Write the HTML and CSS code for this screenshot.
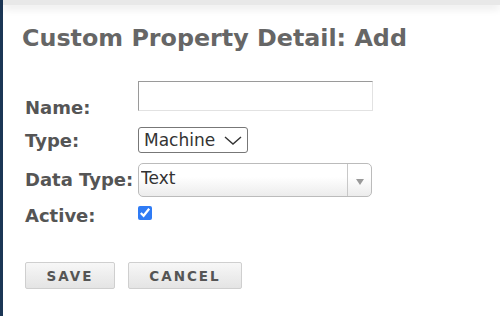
FILE: index.html
```html
<!DOCTYPE html>
<html lang="en">
<head>
    <meta charset="UTF-8">
    <meta name="viewport" content="width=device-width, initial-scale=1.0">
    <title>Custom Property Detail</title>
    <link rel="stylesheet" href="styles.css">
</head>
<body>
    <div class="page">
        <div class="topbar"></div>
        <div class="content">
            <h1>Custom Property Detail: Add</h1>

            <div class="form">
                <label class="row-label name-label" for="name">Name:</label>
                <div class="field name-field">
                    <input type="text" id="name" class="text-input">
                </div>

                <label class="row-label type-label" for="type">Type:</label>
                <div class="field type-field">
                    <span class="select-wrap">
                        <select id="type" class="type-select">
                            <option>Machine</option>
                        </select>
                        <svg class="chevron" width="18" height="9" viewBox="0 0 18 9">
                            <path d="M1 1 L9 8 L17 1" fill="none" stroke="#333" stroke-width="1.4"/>
                        </svg>
                    </span>
                </div>

                <label class="row-label dtype-label" for="dataType">Data Type:</label>
                <div class="field dtype-field">
                    <span class="select-wrap">
                        <select id="dataType" class="dtype-select">
                            <option>Text</option>
                        </select>
                        <span class="dtype-arrow">
                            <svg width="8" height="6" viewBox="0 0 8 6">
                                <path d="M0 0 L8 0 L4 6 Z" fill="#999"/>
                            </svg>
                        </span>
                    </span>
                </div>

                <label class="row-label active-label" for="active">Active:</label>
                <div class="field active-field">
                    <input type="checkbox" id="active" class="check" checked>
                </div>
            </div>

            <div class="buttons">
                <button class="btn save">SAVE</button>
                <button class="btn cancel">CANCEL</button>
            </div>
        </div>
    </div>
</body>
</html>
```

FILE: styles.css
```css
html, body {
    margin: 0;
    padding: 0;
    background-color: white;
}
body {
    font-family: "DejaVu Sans", Verdana, sans-serif;
    color: #555;
}
.page {
    border-left: 3px solid #1b3655;
    min-height: 316px;
    box-sizing: border-box;
}
.topbar {
    height: 5px;
    background-color: #e8e8e8;
    box-shadow: 0 3px 9px rgba(0, 0, 0, 0.12);
}
.content {
    padding-left: 19px;
}
h1 {
    margin: 0;
    padding-top: 19px;
    font-size: 23.8px;
    line-height: 28px;
    color: #666;
}
.form {
    display: grid;
    grid-template-columns: 113px auto;
    grid-template-rows: 36px 41px 42px 32px;
    margin-top: 29px;
    margin-left: 3px;
}
.row-label {
    font-weight: bold;
    font-size: 18px;
    line-height: 20px;
    color: #555;
}
.field {
    display: flex;
    align-items: flex-start;
}
.name-label {
    padding-top: 17px;
}
.text-input {
    width: 235px;
    height: 30px;
    box-sizing: border-box;
    border: 1px solid #e2e2e2;
    border-top-color: #9a9a9a;
    border-left-color: #9a9a9a;
    margin: 0;
}
.type-label {
    padding-top: 14px;
}
.type-field {
    padding-top: 10px;
}
.select-wrap {
    position: relative;
    display: inline-block;
}
.type-select {
    appearance: none;
    width: 110px;
    height: 26px;
    border: 1px solid #777;
    border-radius: 3px;
    background: white;
    font-family: "DejaVu Sans", Verdana, sans-serif;
    font-size: 17px;
    color: #333;
    padding: 0 0 0 5px;
    margin: 0;
    display: block;
}
.chevron {
    position: absolute;
    right: 6px;
    top: 9px;
    pointer-events: none;
}
.dtype-label {
    padding-top: 12px;
}
.dtype-field {
    padding-top: 5px;
}
.dtype-select {
    appearance: none;
    width: 234px;
    height: 34px;
    border: 1px solid #bbb;
    border-radius: 5px;
    background: linear-gradient(#ffffff 40%, #ececec);
    font-family: "DejaVu Sans", Verdana, sans-serif;
    font-size: 17px;
    color: #333;
    padding: 0 0 5px 2px;
    margin: 0;
    display: block;
}
.dtype-arrow {
    position: absolute;
    right: 1px;
    top: 1px;
    bottom: 1px;
    width: 24px;
    border-left: 1px solid #c8c8c8;
    display: flex;
    align-items: center;
    justify-content: center;
    padding-top: 4px;
    box-sizing: border-box;
    pointer-events: none;
}
.active-label {
    padding-top: 6px;
}
.active-field {
    padding-top: 6px;
}
.check {
    width: 14px;
    height: 14px;
    margin: 0;
    accent-color: #2f7bf5;
}
.buttons {
    display: flex;
    gap: 13px;
    margin-top: 30px;
    margin-left: 3px;
}
.btn {
    height: 27px;
    border: 1px solid #cfcfcf;
    border-radius: 2px;
    background: linear-gradient(#f7f7f7, #e4e4e4);
    font-family: "DejaVu Sans", Verdana, sans-serif;
    font-weight: bold;
    font-size: 13.5px;
    letter-spacing: 2px;
    color: #555;
    padding: 0;
    cursor: pointer;
}
.save {
    width: 90px;
}
.cancel {
    width: 114px;
}
```
